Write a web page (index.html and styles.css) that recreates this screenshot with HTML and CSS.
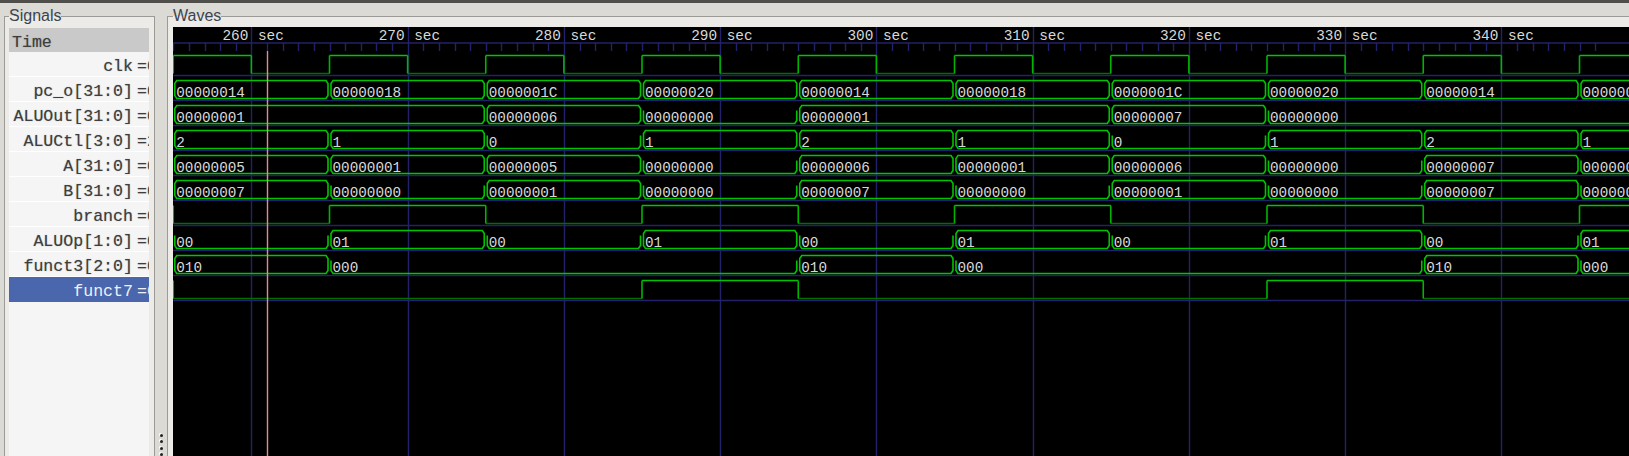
FILE: index.html
```html
<!doctype html>
<html lang="en">
<head>
    <meta charset="utf-8">
    <meta name="viewport" content="width=device-width, initial-scale=1, shrink-to-fit=no">
    <title>GTKWave</title>
    <link rel="stylesheet" href="styles.css">
</head>
<body>
    <div class="panes">
        <fieldset class="frame signals">
            <legend>Signals</legend>
            <div class="signal-list">
                <div class="time-row">Time</div>
                <div class="signal-row"><span class="name">clk</span><span class="eq">=0</span></div>
                <div class="signal-row"><span class="name">pc_o[31:0]</span><span class="eq">=0</span></div>
                <div class="signal-row"><span class="name">ALUOut[31:0]</span><span class="eq">=0</span></div>
                <div class="signal-row"><span class="name">ALUCtl[3:0]</span><span class="eq">=2</span></div>
                <div class="signal-row"><span class="name">A[31:0]</span><span class="eq">=0</span></div>
                <div class="signal-row"><span class="name">B[31:0]</span><span class="eq">=0</span></div>
                <div class="signal-row"><span class="name">branch</span><span class="eq">=0</span></div>
                <div class="signal-row"><span class="name">ALUOp[1:0]</span><span class="eq">=0</span></div>
                <div class="signal-row"><span class="name">funct3[2:0]</span><span class="eq">=0</span></div>
                <div class="signal-row selected"><span class="name">funct7</span><span class="eq">=0</span></div>
            </div>
        </fieldset>
        <div class="divider">
            <span class="grip"></span>
            <span class="grip"></span>
            <span class="grip"></span>
            <span class="grip"></span>
        </div>
        <fieldset class="frame waves">
            <legend>Waves</legend>
            <svg id="waves" class="wave-canvas" viewBox="173 27 1456 429" xmlns="http://www.w3.org/2000/svg"></svg>
        </fieldset>
    </div>
    <script src="waves.js"></script>
</body>
</html>
```

FILE: styles.css
```css
body {
    margin: 0;
    height: 456px;
    overflow: hidden;
    box-sizing: border-box;
    border-top: 3px solid #4f4e4b;
    background-color: #dbdad5;
    font-family: "Liberation Sans", Arial, sans-serif;
}
.panes {
    display: flex;
    height: 453px;
    padding: 4px 0 0 4px;
    box-sizing: border-box;
}
.frame {
    display: flex;
    flex-direction: column;
    margin: 0;
    min-width: 0;
    border: 1px solid #9b9a96;
    border-bottom: none;
    background-color: #ecebe7;
}
.frame legend {
    padding: 0;
    font-size: 16px;
    line-height: 18px;
    color: #3c4450;
}
.signals {
    width: 151px;
    box-sizing: border-box;
    padding: 3px 5px 0 4px;
}
.waves {
    flex: 1;
    border-right: none;
    padding: 2px 0 0 5px;
}
.divider {
    display: flex;
    flex-direction: column;
    justify-content: flex-end;
    align-items: center;
    gap: 3.5px;
    width: 12px;
    overflow: hidden;
}
.grip {
    flex: none;
    width: 3px;
    height: 3px;
    border-radius: 50%;
    background-color: #222;
    box-shadow: -1px -1px 0 #fff;
}
.signal-list {
    flex: 1;
    background-color: #f5f5f5;
    font-family: "Liberation Mono", "Courier New", monospace;
    font-size: 16.6px;
    color: #3e3e3e;
    text-shadow: 0 0 1px rgba(70, 70, 70, 0.5);
}
.time-row {
    height: 24px;
    padding-left: 3px;
    line-height: 30px;
    background-color: #c9c9c9;
}
.signal-row {
    display: flex;
    box-sizing: border-box;
    height: 25px;
    line-height: 29px;
    overflow: hidden;
    white-space: nowrap;
    border-bottom: 1px solid #fff;
}
.signal-row .name {
    flex: none;
    width: 124px;
    text-align: right;
}
.signal-row .eq {
    flex: none;
    margin-left: 4px;
}
.signal-row.selected {
    border-bottom: none;
    background-color: #4a66ad;
    color: #eef0f6;
    text-shadow: none;
}
.wave-canvas {
    display: block;
    flex: 1;
    width: 100%;
    background-color: #000;
}
.grid-line {
    stroke: #22226a;
    stroke-width: 1.4;
}
.cursor-line {
    stroke: #e68a8a;
    stroke-width: 1.4;
}
.trace {
    fill: none;
    stroke: #00c400;
    stroke-width: 1.6;
}
.trace-low {
    stroke: #006e00;
}
.trace-edge {
    stroke: #00b400;
}
.time-label, .bus-label {
    font-family: "Liberation Mono", "Courier New", monospace;
    fill: #d8d8d8;
}
.time-label {
    font-size: 14.4px;
}
.bus-label {
    font-size: 14.3px;
}
```

FILE: waves.js
```js
const SVG_NS = 'http://www.w3.org/2000/svg';
const canvas = document.getElementById('waves');

const RIGHT = 1629;
const BOTTOM = 456;
const START = 173.25;
const PERIOD = 156.25;
const FIRST_ROW = 50;
const ROW_H = 25;
const CHAMFER = 2;

// bus rows: [period index where value starts, value]
const buses = {
    1: [[0, '00000014'], [1, '00000018'], [2, '0000001C'], [3, '00000020'], [4, '00000014'], [5, '00000018'], [6, '0000001C'], [7, '00000020'], [8, '00000014'], [9, '00000018']],
    2: [[0, '00000001'], [2, '00000006'], [3, '00000000'], [4, '00000001'], [6, '00000007'], [7, '00000000']],
    3: [[0, '2'], [1, '1'], [2, '0'], [3, '1'], [4, '2'], [5, '1'], [6, '0'], [7, '1'], [8, '2'], [9, '1']],
    4: [[0, '00000005'], [1, '00000001'], [2, '00000005'], [3, '00000000'], [4, '00000006'], [5, '00000001'], [6, '00000006'], [7, '00000000'], [8, '00000007'], [9, '00000000']],
    5: [[0, '00000007'], [1, '00000000'], [2, '00000001'], [3, '00000000'], [4, '00000007'], [5, '00000000'], [6, '00000001'], [7, '00000000'], [8, '00000007'], [9, '00000000']],
    7: [[0, '00'], [1, '01'], [2, '00'], [3, '01'], [4, '00'], [5, '01'], [6, '00'], [7, '01'], [8, '00'], [9, '01']],
    8: [[0, '010'], [1, '000'], [4, '010'], [5, '000'], [8, '010'], [9, '000']]
};

// single bit rows: start level, then the periods where it toggles
const bits = {
    0: [1, [0.5, 1, 1.5, 2, 2.5, 3, 3.5, 4, 4.5, 5, 5.5, 6, 6.5, 7, 7.5, 8, 8.5, 9, 9.5]],
    6: [0, [1, 2, 3, 4, 5, 6, 7, 8, 9]],
    9: [0, [3, 4, 7, 8]]
};

function add(tag, attrs, text) {
    const el = document.createElementNS(SVG_NS, tag);
    for (const key in attrs) el.setAttribute(key, attrs[key]);
    if (text) el.textContent = text;
    canvas.appendChild(el);
}

function line(cls, x1, y1, x2, y2) {
    add('line', { class: cls, x1: x1, y1: y1, x2: x2, y2: y2 });
}

function timeX(period) {
    return START + PERIOD * period;
}

function drawGrid() {
    line('grid-line', START, 43, RIGHT, 43);
    for (let i = 0; i < 92; i++) {
        const x = Math.round(START + i * PERIOD / 10) + 0.5;
        const major = (i + 5) % 10 === 0;
        line('grid-line', x, major ? 27 : 43, x, major ? BOTTOM : 51);
    }
    for (let r = 0; r < 10; r++) {
        const y = FIRST_ROW + (r + 1) * ROW_H + 0.5;
        line('grid-line', START, y, RIGHT, y);
    }
    for (let i = 0; i < 10; i++) {
        const x = timeX(i + 0.5);
        add('text', { class: 'time-label', x: x - 3, y: 40, 'text-anchor': 'end' }, String(260 + i * 10));
        add('text', { class: 'time-label', x: x + 6.5, y: 40 }, 'sec');
    }
}

function drawBus(row, segs) {
    const top = FIRST_ROW + row * ROW_H + 5.5;
    const bot = top + 18;
    const mid = top + 9;
    segs.forEach((seg, i) => {
        const xa = timeX(seg[0]) + 1.5;
        const xb = i + 1 < segs.length ? timeX(segs[i + 1][0]) - 1.5 : RIGHT + 10;
        let d = `M${xa} ${mid - 4}L${xa} ${bot - 3}L${xa + CHAMFER} ${bot}L${xb - CHAMFER} ${bot}L${xb} ${bot - 3}L${xb} ${mid - 4}`;
        if (!/^0+$/.test(seg[1])) {
            d += `M${xa} ${mid}L${xa} ${top + 3}L${xa + CHAMFER} ${top}L${xb - CHAMFER} ${top}L${xb} ${top + 3}L${xb} ${mid}`;
        }
        add('path', { class: 'trace', d: d });
        add('text', { class: 'bus-label', x: xa + 1.5, y: bot - 1.5 }, seg[1]);
    });
}

function drawBit(row, level, toggles) {
    const top = FIRST_ROW + row * ROW_H + 5.5;
    const bot = top + 18;
    const xs = [0].concat(toggles, [20]).map(timeX);
    let cur = level;
    for (let i = 0; i + 1 < xs.length; i++) {
        const y = cur ? top : bot;
        line(cur ? 'trace' : 'trace trace-low', xs[i], y, Math.min(xs[i + 1], RIGHT), y);
        cur = cur ? 0 : 1;
    }
    xs.slice(0, -1).forEach(x => line('trace trace-edge', x, top, x, bot));
}

drawGrid();
Object.keys(buses).forEach(r => drawBus(Number(r), buses[r]));
Object.keys(bits).forEach(r => drawBit(Number(r), bits[r][0], bits[r][1]));
line('cursor-line', 267.5, 51, 267.5, BOTTOM);
```
